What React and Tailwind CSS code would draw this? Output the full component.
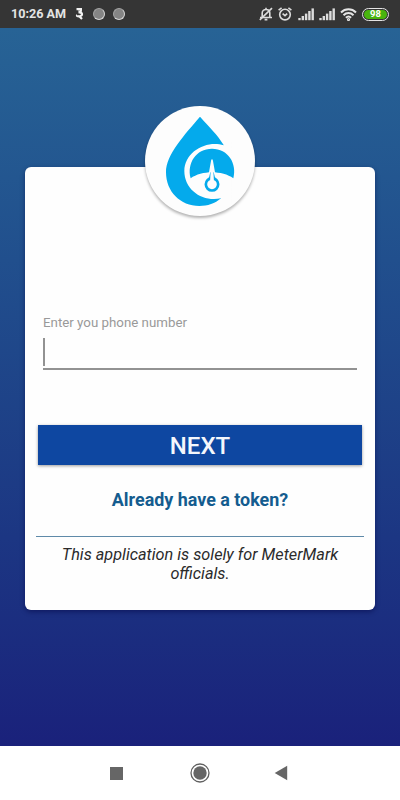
import React from "react";

const SignalBars = () => (
    <svg width="17" height="13" viewBox="0 0 17 13" fill="#dcdcdc">
        <rect x="0.3" y="10" width="2.4" height="2.2" />
        <rect x="3.6" y="8" width="2.4" height="4.2" />
        <rect x="6.9" y="5.6" width="2.4" height="6.6" />
        <rect x="10.2" y="3" width="2.4" height="9.2" />
        <rect x="13.5" y="0.4" width="2.4" height="11.8" />
    </svg>
);

const StatusBar = () => (
    <div className="flex h-[28px] shrink-0 items-center bg-[#353535] pl-[11px] pr-[11px] text-[#e4e4e4]">
        <span className="w-[56px] whitespace-nowrap pt-px text-[12.6px] font-bold leading-none">
            10:26 AM
        </span>
        <svg className="ml-[8px]" width="10" height="14" viewBox="0 0 10 14" fill="none" stroke="#f2f2f2">
            <path d="M1.5 2.2H7M3 2.6C6.5 1.6 7 4.6 3.5 5.4C8 5 8 9 4.5 9.3C2.5 9.5 1.5 8.8 2.2 8M4.5 9.4L7 12" strokeWidth="2.2" />
        </svg>
        <span className="ml-[8px] h-[12px] w-[12px] rounded-full border border-[#a4a4a4] border-b-[#d6d6d6] border-r-[#d6d6d6] bg-[#858585]" />
        <span className="ml-[8px] h-[12px] w-[12px] rounded-full border border-[#a4a4a4] border-b-[#d6d6d6] border-r-[#d6d6d6] bg-[#858585]" />

        <div className="ml-auto flex items-center">
            {/* Muted bell */}
            <svg width="14" height="14" viewBox="0 0 14 14" fill="none" stroke="#dcdcdc" strokeWidth="1.6">
                <path d="M1 10.5H13M3.2 10V6C3.2 1.4 10.8 1.4 10.8 6V10M7 0.8V2.5M5.6 12.6H8.4" />
                <path d="M0.8 12.8L13 1.2" />
            </svg>
            {/* Alarm */}
            <svg className="ml-[5px]" width="14" height="14" viewBox="0 0 14 14" fill="none" stroke="#dcdcdc" strokeWidth="1.6">
                <circle cx="7" cy="7.6" r="5.3" />
                <path d="M0.6 3.2L3.6 0.9M13.4 3.2L10.4 0.9M4.6 6.6L7 8.6L9.2 6.6" />
            </svg>
            <span className="ml-[6px]">
                <SignalBars />
            </span>
            <span className="ml-[4px]">
                <SignalBars />
            </span>
            <svg className="ml-[4px]" width="17" height="13" viewBox="0 0 17 13" fill="none" stroke="#e4e4e4" strokeWidth="2">
                <path d="M1 4.5C5.2 0.3 11.8 0.3 16 4.5" />
                <path d="M3.5 7.2C6.4 4.4 10.6 4.4 13.5 7.2" />
                <path d="M5.9 9.7C7.5 8.2 9.5 8.2 11.1 9.7" />
                <circle cx="8.5" cy="11.5" r="0.6" />
            </svg>
            <span className="ml-[5px] flex h-[13px] w-[27px] items-center justify-center rounded-full border border-[#e4e4e4] p-px">
                <span className="flex h-full w-full items-center justify-center rounded-full bg-[#49b50d] text-[9.5px] font-bold leading-none text-white">
                    98
                </span>
            </span>
        </div>
    </div>
);

// Water drop with a pressure gauge
const Logo = () => (
    <svg className="h-full w-full" viewBox="30 33 330 330">
        <path
            d="M195 65C222 95 248 120 266 150L258 310C240 326 218 333 193 333C136 333 93 290 93 232C93 178 150 118 195 65Z"
            fill="#04aaec"
        />
        <path
            d="M266 151C218 134 148 168 148 228C148 286 204 322 258 310L290 330V140Z"
            fill="#fdfdfd"
        />
        <path
            d="M167 250C155 205 183 161 231 161C279 161 307 205 295 250C262 226 200 226 167 250Z"
            fill="#04aaec"
        />
        <path d="M218 254L228 198C229 191 233 191 234 198L244 254Z" fill="#fdfdfd" />
        <circle cx="231" cy="268" r="27" fill="#fdfdfd" />
        <circle cx="231" cy="268" r="18.5" fill="none" stroke="#04aaec" strokeWidth="8" />
        <path d="M220 256L226 232H236L242 256Z" fill="#04aaec" />
        <path d="M225 262L228.5 205H233.5L237 262Z" fill="#fdfdfd" />
    </svg>
);

const LoginCard = () => (
    <div className="relative mx-[25px] mt-[138.5px] flex h-[443px] flex-col rounded-[6px] bg-[#fefefe] shadow-[0_2px_5px_rgba(0,0,60,0.45)]">
        <div className="absolute -top-[60.5px] left-[120px] h-[110px] w-[110px] rounded-full bg-[#fdfdfd] shadow-[0_2px_3px_rgba(0,0,0,0.3)]">
            <Logo />
        </div>

        <label className="mx-[18px] mt-[148px] block text-[13.3px] leading-[16px] text-[#999999]">
            Enter you phone number
            <span className="mt-[7px] flex h-[32px] w-[314px] border-b-2 border-[#929292]">
                <span className="h-[28px] w-[2px] bg-[#929292]" />
            </span>
        </label>

        <button className="mx-[13px] mt-[55.5px] h-[40px] shrink-0 bg-[#0e47a1] text-[24px] font-medium leading-[42px] text-[#f4f7fc] shadow-[0_1px_3px_rgba(0,0,0,0.4)]">
            NEXT
        </button>

        <a className="mt-[24px] text-center text-[17.9px] font-bold leading-[22px] text-[#145c8f]">
            Already have a token?
        </a>

        <div className="mx-[11px] mt-[25px] h-px shrink-0 bg-[#5f8aa9]" />
        <p className="mx-[18px] mt-[8px] text-center text-[16.25px] italic leading-[19px] text-[#2b2b2b]">
            This application is solely for MeterMark officials.
        </p>
    </div>
);

const NavigationBar = () => (
    <div className="flex h-[54px] shrink-0 items-center bg-white pl-[110px]">
        <span className="h-[13px] w-[13px] bg-[#666666]" />
        <svg className="ml-[67px]" width="20" height="20" viewBox="0 0 20 20">
            <circle cx="10" cy="10" r="9" fill="none" stroke="#606060" strokeWidth="1.3" />
            <circle cx="10" cy="10" r="6.7" fill="#666666" />
        </svg>
        <svg className="ml-[64px]" width="14" height="16" viewBox="0 0 14 16">
            <path d="M0.7 8L13.2 0.8V15.2Z" fill="#666666" />
        </svg>
    </div>
);

const App = () => {
    return (
        <div className="flex h-[800px] w-[400px] flex-col overflow-hidden font-['Roboto',sans-serif]">
            <StatusBar />
            <main className="flow-root flex-1 bg-linear-to-b from-[#276395] to-[#1a217b]">
                <LoginCard />
            </main>
            <NavigationBar />
        </div>
    );
};

export default App;
